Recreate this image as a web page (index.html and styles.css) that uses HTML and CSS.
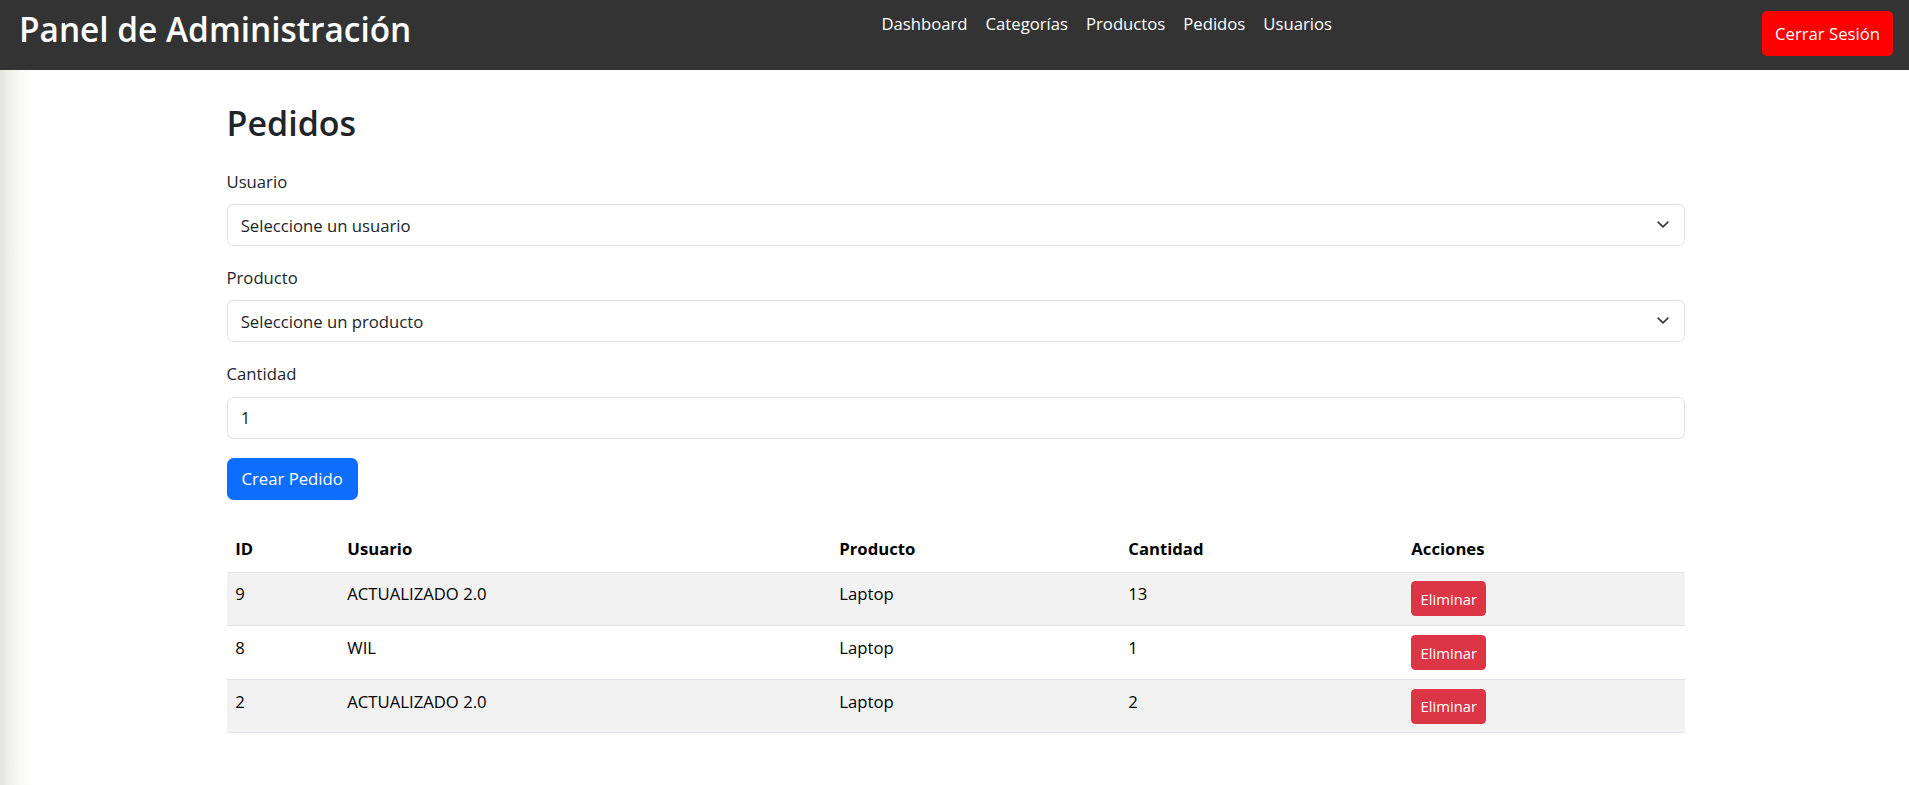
FILE: index.html
```html
<!DOCTYPE html>
<html lang="es">
<head>
<meta charset="utf-8">
<title>Panel de Administración</title>
<link rel="stylesheet" href="styles.css">
</head>
<body>
<header class="navbar">
  <h1 class="brand">Panel de Administración</h1>
  <ul class="nav">
    <li><a href="#">Dashboard</a></li>
    <li><a href="#">Categorías</a></li>
    <li><a href="#">Productos</a></li>
    <li><a href="#">Pedidos</a></li>
    <li><a href="#">Usuarios</a></li>
  </ul>
  <button class="logout">Cerrar Sesión</button>
</header>

<main class="container">
  <h2 class="page-title">Pedidos</h2>
  <form class="order-form">
    <div class="field">
      <label class="label">Usuario</label>
      <div class="select-wrap">
        <select class="control"><option>Seleccione un usuario</option></select>
        <svg class="chevron" viewBox="0 0 16 16" width="18" height="13"><path d="m2 5 6 6 6-6" fill="none" stroke="#343a40" stroke-width="2" stroke-linecap="round" stroke-linejoin="round"/></svg>
      </div>
    </div>
    <div class="field">
      <label class="label">Producto</label>
      <div class="select-wrap">
        <select class="control"><option>Seleccione un producto</option></select>
        <svg class="chevron" viewBox="0 0 16 16" width="18" height="13"><path d="m2 5 6 6 6-6" fill="none" stroke="#343a40" stroke-width="2" stroke-linecap="round" stroke-linejoin="round"/></svg>
      </div>
    </div>
    <div class="field">
      <label class="label">Cantidad</label>
      <input class="control" type="number" value="1">
    </div>
    <button type="button" class="btn-primary">Crear Pedido</button>
  </form>

  <table class="table">
    <thead>
      <tr>
        <th class="c-id">ID</th>
        <th class="c-user">Usuario</th>
        <th class="c-prod">Producto</th>
        <th class="c-qty">Cantidad</th>
        <th class="c-act">Acciones</th>
      </tr>
    </thead>
    <tbody>
      <tr class="striped">
        <td>9</td><td>ACTUALIZADO 2.0</td><td>Laptop</td><td>13</td>
        <td><button class="btn-danger">Eliminar</button></td>
      </tr>
      <tr>
        <td>8</td><td>WIL</td><td>Laptop</td><td>1</td>
        <td><button class="btn-danger">Eliminar</button></td>
      </tr>
      <tr class="striped">
        <td>2</td><td>ACTUALIZADO 2.0</td><td>Laptop</td><td>2</td>
        <td><button class="btn-danger">Eliminar</button></td>
      </tr>
    </tbody>
  </table>
</main>
</body>
</html>
```

FILE: styles.css
```css
* { box-sizing: border-box; }

html, body { height: 100%; }

body {
  margin: 0;
  font-family: "Open Sans", "Noto Sans", sans-serif;
  font-size: 16.7px;
  color: #212529;
  background: linear-gradient(to right, #e5e5df 0px, #eeeeea 8px, #f9f9f7 20px, #ffffff 34px);
}

/* Navbar */
.navbar {
  height: 70px;
  background: #333333;
  display: flex;
  justify-content: space-between;
  align-items: flex-start;
  padding: 0 16px 0 19px;
}

.brand {
  margin: 8px 0 0;
  font-size: 33.4px;
  line-height: 42px;
  font-weight: 600;
  color: #ffffff;
}

.nav {
  list-style: none;
  margin: 11px 0 0;
  padding: 0 0 0 40px;
  display: flex;
  gap: 18px;
}

.nav a {
  color: #ffffff;
  text-decoration: none;
  font-size: 16.7px;
  line-height: 26px;
}

.logout {
  margin-top: 11px;
  height: 45px;
  padding: 0 13px;
  background: #ff0000;
  color: #ffffff;
  border: none;
  border-radius: 5px;
  font-family: inherit;
  font-size: 16.7px;
}

/* Content */
.container {
  width: 1458px;
  margin: 0 auto;
  padding-top: 32px;
  position: relative;
  left: 1px;
}

.page-title {
  margin: 0 0 25px;
  font-size: 34px;
  line-height: 42px;
  font-weight: 600;
  color: #212529;
}

.field { margin-bottom: 19px; }

.label {
  display: block;
  margin-bottom: 8.8px;
  line-height: 26.4px;
  font-size: 16.7px;
}

.select-wrap { position: relative; }

.control {
  display: block;
  width: 100%;
  height: 42px;
  padding: 0 13.2px;
  border: 1px solid #dee2e6;
  border-radius: 6.6px;
  background: #ffffff;
  font-family: inherit;
  font-size: 16.7px;
  color: #212529;
  appearance: none;
  -webkit-appearance: none;
  -moz-appearance: textfield;
}

.control::-webkit-inner-spin-button,
.control::-webkit-outer-spin-button { -webkit-appearance: none; margin: 0; }

.chevron {
  position: absolute;
  right: 13px;
  top: 14px;
  pointer-events: none;
}

.btn-primary {
  height: 42px;
  padding: 0 15px;
  background: #0d6efd;
  color: #ffffff;
  border: none;
  border-radius: 6.6px;
  font-family: inherit;
  font-size: 16.7px;
}

/* Table */
.table {
  width: 100%;
  margin-top: 28px;
  border-collapse: collapse;
  table-layout: fixed;
  color: #000000;
}

.table th,
.table td {
  padding: 8.8px;
  line-height: 26.4px;
  text-align: left;
  vertical-align: top;
  border-bottom: 1px solid #dee2e6;
  font-size: 16.7px;
}

.table th { font-weight: 700; }

.c-id { width: 112px; }
.c-user { width: 492px; }
.c-prod { width: 289px; }
.c-qty { width: 283px; }
.c-act { width: 282px; }

.striped td { background: #f2f2f2; }

.btn-danger {
  display: block;
  width: 75px;
  height: 35px;
  padding: 0;
  background: #dc3545;
  color: #ffffff;
  border: none;
  border-radius: 4.4px;
  font-family: inherit;
  font-size: 14.8px;
}
```
